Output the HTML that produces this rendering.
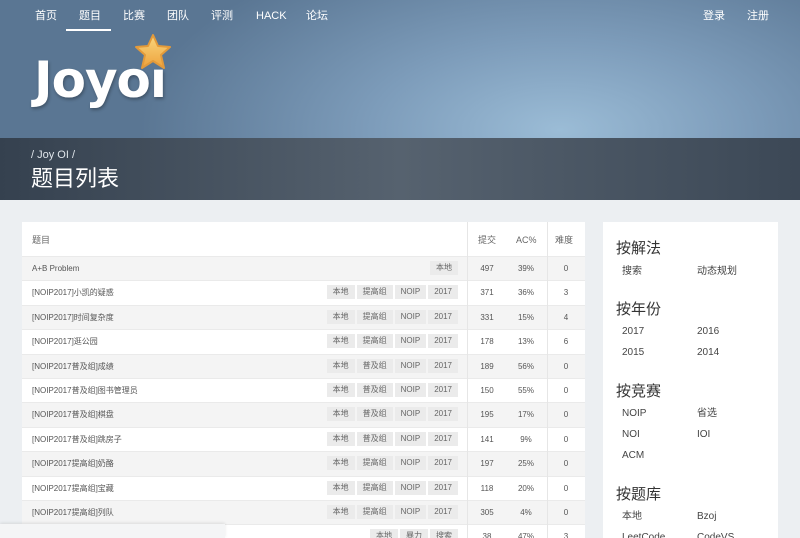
<!DOCTYPE html>
<html><head><meta charset="utf-8"><style>
*{margin:0;padding:0;box-sizing:border-box}
html,body{width:800px;height:538px;overflow:hidden}
body{background:#eceff2;font-family:"Liberation Sans","Noto Sans CJK SC",sans-serif;position:relative}
span,a,div{line-height:12px}
.hdr{position:absolute;left:0;top:0;width:800px;height:138px;background:radial-gradient(ellipse 420px 200px at 560px 130px,#9bbcd6 0%,#7d9cba 45%,#5a7693 100%)}
.nav a{position:absolute;top:10px;color:#fff;font-size:11px;text-decoration:none;line-height:12px}
.ul{position:absolute;left:66px;top:29px;width:45px;height:2px;background:#fff}
.logo{position:absolute;left:34px;top:50px;font-size:50px;line-height:60px;color:#fff;font-family:"DejaVu Sans",sans-serif;font-weight:bold;letter-spacing:-1px;text-shadow:1px 2px 3px rgba(0,0,0,.3)}
.band{position:absolute;left:0;top:138px;width:800px;height:62px;background:linear-gradient(90deg,#35414f,#56626f 50%,#3c4856)}
.bc{position:absolute;left:31px;top:149px;color:#dfe5ea;font-size:11px}
.ttl{position:absolute;left:31px;top:164px;color:#fff;font-size:22px;line-height:30px}
.card{position:absolute;left:22px;top:222px;width:563px;height:316px;background:#fff;overflow:hidden}
.row{position:absolute;left:0;width:563px;height:24.4px;font-size:8px;color:#555;border-top:1px solid #eaeaea}
.row.g{background:#f4f4f4}
.row .n{position:absolute;left:10px;top:6px;line-height:12px}
.tags{position:absolute;right:127px;top:4px;display:flex;gap:2px}
.tags span{background:#ebebeb;padding:0 6px;height:14px;line-height:14px;font-size:8px;color:#666}
.c{position:absolute;top:6px;text-align:center;width:36px}
.vl{position:absolute;top:0;width:1px;height:316px;background:#e6e6e6}
.side{position:absolute;left:603px;top:222px;width:175px;height:316px;background:#fff}
.side h3{position:absolute;left:13px;font-size:15px;line-height:20px;font-weight:normal;color:#333}
.side span{position:absolute;font-size:10px;line-height:12px;color:#444}
.ov{position:absolute;left:0;top:524px;width:225px;height:14px;background:#f4f5f6;box-shadow:0 -1px 3px rgba(0,0,0,.1)}
</style></head><body>
<div class="hdr"></div>
<div class="nav"><a style="left:35px">首页</a><a style="left:79px">题目</a><a style="left:123px">比赛</a><a style="left:167px">团队</a><a style="left:211px">评测</a><a style="left:256px">HACK</a><a style="left:306px">论坛</a><a style="left:703px">登录</a><a style="left:747px">注册</a></div>
<div class="ul"></div>
<div class="logo">Joyoı</div>
<svg style="position:absolute;left:133px;top:33px" width="40" height="38" viewBox="0 0 40 38"><defs><linearGradient id="s" x1="0" y1="0" x2="0" y2="1"><stop offset="0" stop-color="#f9d77e"/><stop offset="1" stop-color="#eea23c"/></linearGradient></defs><path d="M20 2 L25 13 L37 14 L28 22 L31 35 L20 28 L9 35 L12 22 L3 14 L15 13 Z" fill="url(#s)" stroke="#e39a3a" stroke-linejoin="round" stroke-width="2"/></svg>
<div class="band"></div>
<div class="bc">/ Joy OI /</div>
<div class="ttl">题目列表</div>
<div class="card">
<div style="position:absolute;left:10px;top:12px;font-size:9px;color:#666">题目</div>
<div style="position:absolute;left:456px;top:12px;font-size:9px;color:#666">提交</div>
<div style="position:absolute;left:494px;top:12px;font-size:9px;color:#666">AC%</div>
<div style="position:absolute;left:533px;top:12px;font-size:9px;color:#666">难度</div>
<div id="rows" style="position:absolute;left:0;top:34px">
<div class="row g" style="top:0"><span class="n">A+B Problem</span><div class="tags"><span>本地</span></div><span class="c" style="left:447px">497</span><span class="c" style="left:486px">39%</span><span class="c" style="left:526px">0</span></div>
<div class="row" style="top:24.4px"><span class="n">[NOIP2017]小凯的疑惑</span><div class="tags"><span>本地</span><span>提高组</span><span>NOIP</span><span>2017</span></div><span class="c" style="left:447px">371</span><span class="c" style="left:486px">36%</span><span class="c" style="left:526px">3</span></div>
<div class="row g" style="top:48.8px"><span class="n">[NOIP2017]时间复杂度</span><div class="tags"><span>本地</span><span>提高组</span><span>NOIP</span><span>2017</span></div><span class="c" style="left:447px">331</span><span class="c" style="left:486px">15%</span><span class="c" style="left:526px">4</span></div>
<div class="row" style="top:73.2px"><span class="n">[NOIP2017]逛公园</span><div class="tags"><span>本地</span><span>提高组</span><span>NOIP</span><span>2017</span></div><span class="c" style="left:447px">178</span><span class="c" style="left:486px">13%</span><span class="c" style="left:526px">6</span></div>
<div class="row g" style="top:97.6px"><span class="n">[NOIP2017普及组]成绩</span><div class="tags"><span>本地</span><span>普及组</span><span>NOIP</span><span>2017</span></div><span class="c" style="left:447px">189</span><span class="c" style="left:486px">56%</span><span class="c" style="left:526px">0</span></div>
<div class="row" style="top:122px"><span class="n">[NOIP2017普及组]图书管理员</span><div class="tags"><span>本地</span><span>普及组</span><span>NOIP</span><span>2017</span></div><span class="c" style="left:447px">150</span><span class="c" style="left:486px">55%</span><span class="c" style="left:526px">0</span></div>
<div class="row g" style="top:146.4px"><span class="n">[NOIP2017普及组]棋盘</span><div class="tags"><span>本地</span><span>普及组</span><span>NOIP</span><span>2017</span></div><span class="c" style="left:447px">195</span><span class="c" style="left:486px">17%</span><span class="c" style="left:526px">0</span></div>
<div class="row" style="top:170.8px"><span class="n">[NOIP2017普及组]跳房子</span><div class="tags"><span>本地</span><span>普及组</span><span>NOIP</span><span>2017</span></div><span class="c" style="left:447px">141</span><span class="c" style="left:486px">9%</span><span class="c" style="left:526px">0</span></div>
<div class="row g" style="top:195.2px"><span class="n">[NOIP2017提高组]奶酪</span><div class="tags"><span>本地</span><span>提高组</span><span>NOIP</span><span>2017</span></div><span class="c" style="left:447px">197</span><span class="c" style="left:486px">25%</span><span class="c" style="left:526px">0</span></div>
<div class="row" style="top:219.6px"><span class="n">[NOIP2017提高组]宝藏</span><div class="tags"><span>本地</span><span>提高组</span><span>NOIP</span><span>2017</span></div><span class="c" style="left:447px">118</span><span class="c" style="left:486px">20%</span><span class="c" style="left:526px">0</span></div>
<div class="row g" style="top:244px"><span class="n">[NOIP2017提高组]列队</span><div class="tags"><span>本地</span><span>提高组</span><span>NOIP</span><span>2017</span></div><span class="c" style="left:447px">305</span><span class="c" style="left:486px">4%</span><span class="c" style="left:526px">0</span></div>
<div class="row" style="top:268.4px"><span class="n"></span><div class="tags"><span>本地</span><span>暴力</span><span>搜索</span></div><span class="c" style="left:447px">38</span><span class="c" style="left:486px">47%</span><span class="c" style="left:526px">3</span></div>
</div>
<div class="vl" style="left:445px"></div><div class="vl" style="left:525px"></div>
</div>
<div class="ov"></div>
<div class="side">
<h3 style="top:17px">按解法</h3><span style="left:19px;top:44px">搜索</span><span style="left:94px;top:44px">动态规划</span>
<h3 style="top:78px">按年份</h3><span style="left:19px;top:104px">2017</span><span style="left:94px;top:104px">2016</span><span style="left:19px;top:125px">2015</span><span style="left:94px;top:125px">2014</span>
<h3 style="top:160px">按竞赛</h3><span style="left:19px;top:186px">NOIP</span><span style="left:94px;top:186px">省选</span><span style="left:19px;top:207px">NOI</span><span style="left:94px;top:207px">IOI</span><span style="left:19px;top:228px">ACM</span>
<h3 style="top:263px">按题库</h3><span style="left:19px;top:289px">本地</span><span style="left:94px;top:289px">Bzoj</span><span style="left:19px;top:310px">LeetCode</span><span style="left:94px;top:310px">CodeVS</span>
</div>
</body></html>
